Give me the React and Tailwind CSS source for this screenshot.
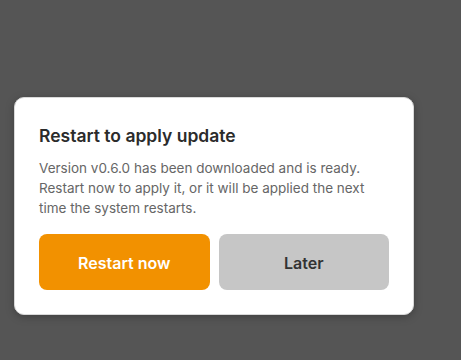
export default function App() {
  return (
    <div
      className="w-[461px] h-[360px] bg-[#555555] pt-[97px] pl-[14px] overflow-hidden"
      style={{ fontFamily: "Inter, 'Noto Sans', sans-serif" }}
    >
      {/* Диалог обновления */}
      <div className="w-[400px] bg-white rounded-[10px] border border-[#d9d9d9] shadow-[0_2px_8px_rgba(0,0,0,0.25)] p-[24px]">
        <h2 className="text-[17.5px] leading-[24px] pt-[2px] font-semibold text-[#2b2b2b]">
          Restart to apply update
        </h2>
        <p className="mt-[10px] text-[13.5px] leading-[20px] text-[#666666]">
          Version v0.6.0 has been downloaded and is ready. Restart now to apply it, or it will be applied the next time the system restarts.
        </p>
        <div className="mt-[16px] flex gap-[9px]">
          <button className="flex-1 h-[56px] pt-[2px] rounded-[8px] bg-[#f29100] text-white text-[16px] font-semibold">
            Restart now
          </button>
          <button className="flex-1 h-[56px] pt-[2px] rounded-[8px] bg-[#c6c6c6] text-[#333333] text-[16px] font-semibold">
            Later
          </button>
        </div>
      </div>
    </div>
  );
}
